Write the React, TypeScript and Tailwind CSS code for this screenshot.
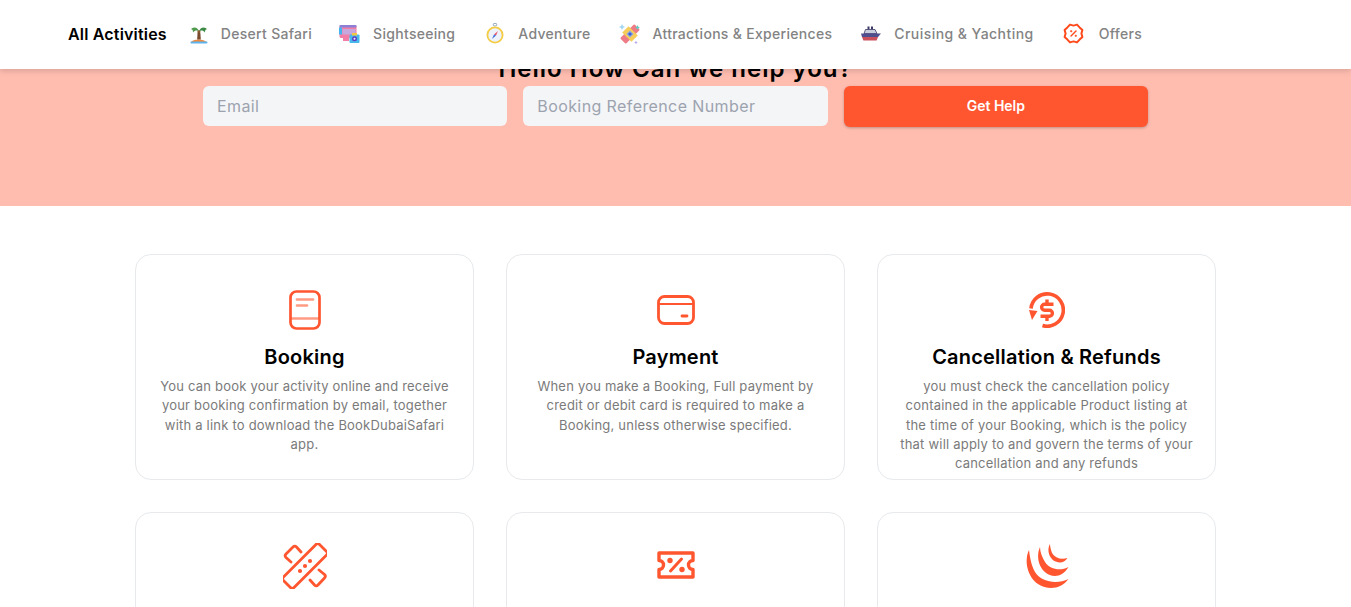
import type { ReactNode } from 'react';

const ORANGE = '#ff5630';

function PalmIcon() {
    return (
        <svg width="20" height="20" viewBox="0 0 20 20">
            <path d="M1.5 18.5 C4 14.5 15 14.5 18 18.5 Z" fill="#f08a3c" />
            <rect x="1.5" y="17.6" width="17" height="1.8" rx="0.9" fill="#5fb4ee" />
            <path d="M8.6 7 H11.2 L11.8 15.5 H8.2 Z" fill="#7a4a2c" />
            <path d="M10 7 C8 2.5 4 2.5 1.5 5.5 C3 5 4 5.5 4 8.5 C6 6 8 6.5 10 7Z" fill="#4f9a4d" />
            <path d="M10 7 C12 2.5 16 2.5 18.5 5.5 C17 5 16 5.5 16 8.5 C14 6 12 6.5 10 7Z" fill="#3d8a45" />
            <circle cx="10" cy="7.5" r="1.2" fill="#8a5a30" />
        </svg>
    );
}

function SightseeingIcon() {
    return (
        <svg width="21" height="20" viewBox="0 0 21 20">
            <rect x="0.5" y="1" width="17" height="13" rx="1.5" fill="#f27ea8" />
            <rect x="0.5" y="1" width="17" height="2.4" rx="1" fill="#8b7fd6" />
            <rect x="3.5" y="5" width="13" height="5.5" fill="#c7a8dc" />
            <rect x="0" y="3.5" width="3" height="7" fill="#45b4ee" />
            <rect x="4" y="14" width="6" height="3" fill="#f27ea8" />
            <rect x="10.5" y="10.5" width="10" height="8.5" rx="1" fill="#47b8ec" />
            <rect x="13" y="9" width="5" height="2.5" fill="#f7c83e" />
            <circle cx="15.5" cy="14.7" r="2.5" fill="#5a3fc0" />
            <circle cx="15.5" cy="14.7" r="1" fill="#f4f1ff" />
        </svg>
    );
}

function CompassIcon() {
    return (
        <svg width="18" height="21" viewBox="0 0 18 21">
            <rect x="7.3" y="0.5" width="3.4" height="2.4" rx="0.8" fill="none" stroke="#8aa0b8" strokeWidth="0.9" />
            <circle cx="9" cy="12" r="7.6" fill="#eef3fb" stroke="#f4cc45" strokeWidth="1.8" />
            <path d="M12 8 L10 12.6 L8 11.4Z" fill="#e8556a" />
            <path d="M6 16 L8 11.4 L10 12.6Z" fill="#3f6fd8" />
        </svg>
    );
}

function AttractionIcon() {
    return (
        <svg width="22" height="22" viewBox="0 0 22 22">
            <g transform="rotate(45 11 11)">
                <rect x="7" y="1" width="8" height="20" rx="1" fill="#ee7c86" />
                <rect x="4.5" y="6.5" width="13" height="9" fill="#f5cd58" />
            </g>
            <path d="M11 7.5 L14.5 11 L11 14.5 L7.5 11Z" fill="#8ea6ea" />
            <circle cx="11" cy="11" r="1.6" fill="#3f5fc8" />
            <path d="M3 1 L4 3 L6 4 L4 5 L3 7 L2 5 L0 4 L2 3Z" fill="#a4d8f2" />
            <path d="M18.5 2 L19.3 3.7 L21 4.5 L19.3 5.3 L18.5 7 L17.7 5.3 L16 4.5 L17.7 3.7Z" fill="#5ccfc0" />
            <path d="M17 17.5 L17.6 18.9 L19 19.5 L17.6 20.1 L17 21.5 L16.4 20.1 L15 19.5 L16.4 18.9Z" fill="#b7a6ee" />
        </svg>
    );
}

function ShipIcon() {
    return (
        <svg width="20" height="16" viewBox="0 0 20 16">
            <rect x="6.5" y="0.5" width="2" height="3" fill="#3d3a68" />
            <rect x="10" y="0.5" width="2" height="3" fill="#3d3a68" />
            <path d="M4.5 3.5 H14 L16 7.5 H3Z" fill="#c9cede" stroke="#3d3a68" strokeWidth="0.8" />
            <path d="M0 7.5 H20 L17 11 H1Z" fill="#4f4f90" />
            <path d="M1 11 H17 L15.6 14.5 H2.4Z" fill="#c9505c" />
        </svg>
    );
}

function OffersIcon() {
    return (
        <svg width="21" height="21" viewBox="0 0 21 21" fill="none" stroke="#ff4a1c">
            <path
                d="M7 1.6 L10.5 2.6 L14 1.6 L16.6 4.4 L19.4 7 L18.4 10.5 L19.4 14 L16.6 16.6 L14 19.4 L10.5 18.4 L7 19.4 L4.4 16.6 L1.6 14 L2.6 10.5 L1.6 7 L4.4 4.4 Z"
                strokeWidth="2"
                strokeLinejoin="round"
            />
            <path d="M13 8 L8 13" strokeWidth="1.4" strokeLinecap="round" />
            <circle cx="8.2" cy="8.2" r="0.8" fill="#ff4a1c" strokeWidth="0.6" />
            <circle cx="12.8" cy="12.8" r="0.8" fill="#ff4a1c" strokeWidth="0.6" />
        </svg>
    );
}

function BookingIcon() {
    return (
        <svg width="32" height="40" viewBox="0 0 32 40" fill="none" stroke={ORANGE} strokeWidth="2.7" strokeLinecap="round">
            <rect x="1.5" y="1.5" width="29" height="37" rx="6" />
            <path d="M8 9.5 H24 M8 15.5 H18 M2 28.5 H30" strokeOpacity="0.6" />
        </svg>
    );
}

function PaymentIcon() {
    return (
        <svg width="38" height="30" viewBox="0 0 38 30" fill="none" stroke={ORANGE} strokeWidth="2.8" strokeLinecap="round">
            <rect x="1.5" y="1.5" width="35" height="27" rx="6" />
            <path d="M2 9 H36" strokeWidth="2.2" />
            <path d="M25 21 H30" />
        </svg>
    );
}

function RefundIcon() {
    return (
        <svg width="36" height="36" viewBox="0 0 36 36" fill="none" stroke={ORANGE} strokeWidth="3.6">
            <path d="M13.5 33.6 A16.2 16.2 0 1 0 2 16.5" />
            <polygon points="0,18 8.5,19 3,28" fill={ORANGE} stroke="none" />
            <path d="M24.5 12.3 H15.6 A3 3 0 0 0 15.6 18.3 H20.4 A3 3 0 0 1 20.4 24.3 H11.5" strokeWidth="3.4" />
            <path d="M18 7.5 V12 M18 24.5 V29" strokeWidth="3.4" />
        </svg>
    );
}

function BandIcon() {
    return (
        <svg width="44" height="46" viewBox="0 0 44 46" fill="none" stroke={ORANGE} strokeWidth="2.8" strokeLinecap="round">
            <rect x="14.5" y="-2.5" width="15" height="51" rx="2.5" transform="rotate(45 22 23)" />
            <path d="M18 9 L13.5 4 A2.5 2.5 0 0 0 10 4 L3 11 A2.5 2.5 0 0 0 3 14.5 L8 19" />
            <path d="M27 37 L31.5 42 A2.5 2.5 0 0 0 35 42 L41.5 35 A2.5 2.5 0 0 0 41.5 31.5 L36 27" />
            <circle cx="17" cy="28" r="2.1" fill={ORANGE} stroke="none" />
            <circle cx="22" cy="23" r="2.1" fill={ORANGE} stroke="none" />
            <circle cx="27" cy="18" r="2.1" fill={ORANGE} stroke="none" />
        </svg>
    );
}

function TicketIcon() {
    return (
        <svg width="38" height="28" viewBox="0 0 38 28" fill="none" stroke={ORANGE} strokeWidth="3.4" strokeLinejoin="round">
            <path d="M2 2 H36 V9.5 A4.5 4.5 0 0 0 36 18.5 V26 H2 V18.5 A4.5 4.5 0 0 0 2 9.5 Z" />
            <path d="M13.5 20 L24.5 8" strokeLinecap="round" strokeWidth="3" />
            <circle cx="13" cy="9.5" r="2.7" fill={ORANGE} stroke="none" />
            <circle cx="25" cy="18.5" r="2.7" fill={ORANGE} stroke="none" />
        </svg>
    );
}

function CrescentsIcon() {
    return (
        <svg width="44" height="46" viewBox="0 0 44 46" fill={ORANGE}>
            <path d="M4 7 C-3 22 6 45 26 45 C33 45 39 42 43.5 36 C33 41 17 40 10 29 C6 22 5 14 4 7Z" />
            <path d="M15 4 C10 15 15 32 30 33 C35 33 40 30 43.5 24 C36 28 25 27 20 19 C17 14 15 9 15 4Z" />
            <path d="M25 1 C21 8 25 19 35 19.5 C38 19.5 41 17.5 42.5 15 C36 17 30 15 27 10 C26 7 25 4 25 1Z" />
        </svg>
    );
}

const navItems: { label: string; icon: ReactNode; cls: string }[] = [
    { label: 'Desert Safari', icon: <PalmIcon />, cls: 'gap-3' },
    { label: 'Sightseeing', icon: <SightseeingIcon />, cls: '-ml-[2px] gap-[13px]' },
    { label: 'Adventure', icon: <CompassIcon />, cls: 'ml-[2px] gap-[14px]' },
    { label: 'Attractions & Experiences', icon: <AttractionIcon />, cls: 'ml-[-1px] gap-[12px]' },
    { label: 'Cruising & Yachting', icon: <ShipIcon />, cls: 'gap-[13px] tracking-[0.45px]' },
    { label: 'Offers', icon: <OffersIcon />, cls: 'gap-[15px]' },
];

const topCards: { title: string; icon: ReactNode; lines: string[] }[] = [
    {
        title: 'Booking',
        icon: <BookingIcon />,
        lines: [
            'You can book your activity online and receive',
            'your booking confirmation by email, together',
            'with a link to download the BookDubaiSafari',
            'app.',
        ],
    },
    {
        title: 'Payment',
        icon: <PaymentIcon />,
        lines: [
            'When you make a Booking, Full payment by',
            'credit or debit card is required to make a',
            'Booking, unless otherwise specified.',
        ],
    },
    {
        title: 'Cancellation & Refunds',
        icon: <RefundIcon />,
        lines: [
            'you must check the cancellation policy',
            'contained in the applicable Product listing at',
            'the time of your Booking, which is the policy',
            'that will apply to and govern the terms of your',
            'cancellation and any refunds',
        ],
    },
];

export default function App() {
    return (
        <div className="h-[607px] overflow-hidden bg-white font-['Inter',sans-serif]">
            {/* Activities bar */}
            <nav className="relative z-10 flex h-[69px] items-center bg-white pb-[2px] pl-[68px] shadow-[0_2px_6px_rgba(0,0,0,0.15)]">
                <span className="mr-[22px] text-base font-semibold tracking-[0.18px] text-black">All Activities</span>
                <div className="flex items-center gap-[29px] text-sm font-medium tracking-[0.3px] text-[#838383]">
                    {navItems.map((item) => (
                        <a key={item.label} className={`flex items-center ${item.cls}`}>
                            {item.icon}
                            <span>{item.label}</span>
                        </a>
                    ))}
                </div>
            </nav>

            {/* Help form */}
            <section className="h-[137px] overflow-hidden bg-[#ffbdb0]">
                <h1 className="-mt-[9px] text-center text-2xl font-semibold leading-[18px] tracking-[1px] text-black">
                    Hello How Can we help you?
                </h1>
                <form className="mx-auto mt-[8px] grid w-[945px] grid-cols-3 items-start gap-4">
                    <input
                        placeholder="Email"
                        className="h-10 rounded-md bg-[#f4f5f7] px-3.5 text-base tracking-[0.4px] placeholder:text-[#9ca3af]"
                    />
                    <input
                        placeholder="Booking Reference Number"
                        className="h-10 rounded-md bg-[#f4f5f7] px-3.5 text-base tracking-[0.4px] placeholder:text-[#9ca3af]"
                    />
                    <button
                        type="button"
                        className="h-[41px] rounded-md bg-[#ff5630] pb-[2px] text-sm font-semibold text-white shadow-[0_1px_3px_rgba(0,0,0,0.25)]"
                    >
                        Get Help
                    </button>
                </form>
            </section>

            {/* Help topics */}
            <section className="mx-auto grid w-[1081px] grid-cols-3 gap-x-8 gap-y-8 pt-12">
                {topCards.map((card) => (
                    <div key={card.title} className="h-[226px] rounded-2xl border border-[#e7e9ec] pt-[35px] text-center">
                        <div className="flex h-10 items-center justify-center">{card.icon}</div>
                        <h2 className="mt-[10px] text-xl font-semibold leading-[34px] tracking-[0.2px] text-black">{card.title}</h2>
                        <p className="mt-[3px] text-[13px] leading-[19.3px] tracking-[0.21px] text-[#7a7a7a]">
                            {card.lines.map((line) => (
                                <span key={line} className="block">{line}</span>
                            ))}
                        </p>
                    </div>
                ))}
                <div className="h-[226px] rounded-2xl border border-[#e7e9ec] pt-[30px]">
                    <div className="flex justify-center"><BandIcon /></div>
                </div>
                <div className="h-[226px] rounded-2xl border border-[#e7e9ec] pt-[38px]">
                    <div className="flex justify-center"><TicketIcon /></div>
                </div>
                <div className="h-[226px] rounded-2xl border border-[#e7e9ec] pt-[30px]">
                    <div className="flex justify-center"><CrescentsIcon /></div>
                </div>
            </section>
        </div>
    );
}
